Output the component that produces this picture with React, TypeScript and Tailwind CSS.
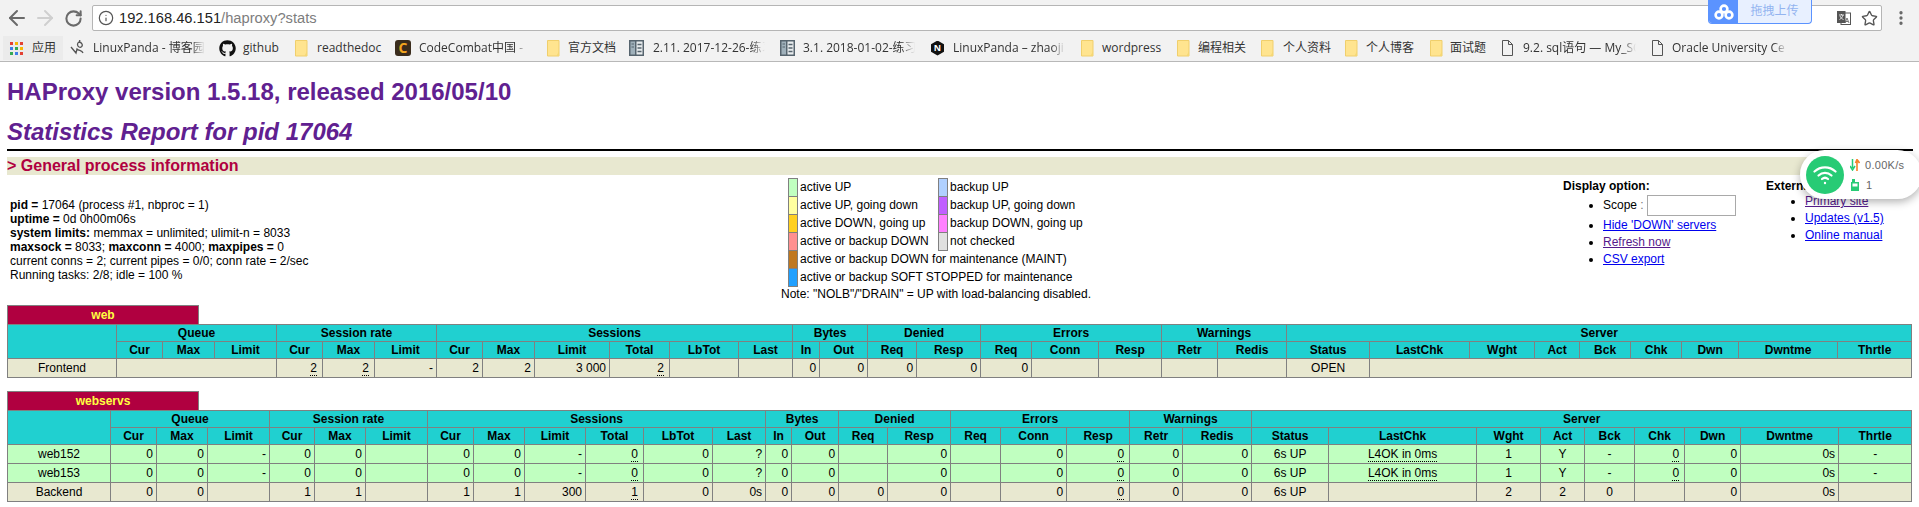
import { ArrowLeft, ArrowRight, RotateCw, Info, Star, MoreVertical } from "lucide-react";
import { FaGithub } from "react-icons/fa";

const webCols = ["w-[109px]", "w-[46px]", "w-[52px]", "w-[62px]", "w-[46px]", "w-[52px]", "w-[62px]", "w-[46px]", "w-[52px]", "w-[75px]", "w-[60px]", "w-[69px]", "w-[54px]", "w-[27px]", "w-[48px]", "w-[49px]", "w-[64px]", "w-[51px]", "w-[67px]", "w-[63px]", "w-[56px]", "w-[69px]", "w-[83px]", "w-[100px]", "w-[65px]", "w-[45px]", "w-[51px]", "w-[51px]", "w-[57px]", "w-[99px]", "w-[74px]"];
const servCols = ["w-[103px]", "w-[46px]", "w-[51px]", "w-[62px]", "w-[45px]", "w-[51px]", "w-[62px]", "w-[46px]", "w-[51px]", "w-[61px]", "w-[58px]", "w-[69px]", "w-[53px]", "w-[26px]", "w-[47px]", "w-[49px]", "w-[63px]", "w-[50px]", "w-[66px]", "w-[63px]", "w-[53px]", "w-[69px]", "w-[77px]", "w-[148px]", "w-[64px]", "w-[44px]", "w-[50px]", "w-[50px]", "w-[56px]", "w-[98px]", "w-[73px]"];

const groups: [string, number][] = [["Queue", 3], ["Session rate", 3], ["Sessions", 6], ["Bytes", 2], ["Denied", 2], ["Errors", 3], ["Warnings", 2], ["Server", 9]];
const subHeads = ["Cur", "Max", "Limit", "Cur", "Max", "Limit", "Cur", "Max", "Limit", "Total", "LbTot", "Last", "In", "Out", "Req", "Resp", "Req", "Conn", "Resp", "Retr", "Redis", "Status", "LastChk", "Wght", "Act", "Bck", "Chk", "Dwn", "Dwntme", "Thrtle"];

// "_" prefix = dotted underline, "^" prefix = centered
const serverRow = ["0", "0", "-", "0", "0", "", "0", "0", "-", "_0", "0", "?", "0", "0", "", "0", "", "0", "_0", "0", "0", "^6s UP", "^_L4OK in 0ms", "^1", "^Y", "^-", "_0", "0", "0s", "^-"];
const backendRow = ["0", "0", "", "1", "1", "", "1", "1", "300", "_1", "0", "0s", "0", "0", "0", "0", "", "0", "_0", "0", "0", "^6s UP", "", "^2", "^2", "^0", "", "0", "0s", ""];

const cell = "border border-[#808080] h-[19px] p-0 px-[3px] align-middle overflow-hidden whitespace-nowrap";

const Cell = ({ value }: { value: string }) => {
  const centered = value.startsWith("^");
  const raw = centered ? value.slice(1) : value;
  const dotted = raw.startsWith("_");
  const text = dotted ? raw.slice(1) : raw;
  return (
    <td className={`${cell} ${centered ? "text-center" : "text-right"}`}>
      {dotted ? <span className={`border-b border-dotted border-black ${centered ? "" : "mr-[2px]"}`}>{text}</span> : text}
    </td>
  );
};

const StatTable = ({ name, cols, children }: { name: string; cols: string[]; children: React.ReactNode }) => (
  <div>
    <div className="w-[192px] h-[19px] bg-[#b00040] border border-[#808080] border-b-0 flex items-center justify-center font-bold text-[#ffff40]">
      {name}
    </div>
    <table className="table-fixed border-collapse w-[1904px]">
      <colgroup>
        {cols.map((c, i) => (
          <col key={i} className={c} />
        ))}
      </colgroup>
      <thead>
        <tr className="bg-[#20d0d0] h-[17px]">
          <th rowSpan={2} className="border border-[#808080] p-0" />
          {groups.map(([label, span]) => (
            <th key={label} colSpan={span} className="border border-[#808080] p-0 h-[17px] font-bold">
              {label}
            </th>
          ))}
        </tr>
        <tr className="bg-[#20d0d0] h-[17px]">
          {subHeads.map((h, i) => (
            <th key={i} className="border border-[#808080] p-0 h-[17px] font-bold">
              {h}
            </th>
          ))}
        </tr>
      </thead>
      <tbody>{children}</tbody>
    </table>
  </div>
);

const Folder = () => (
  <svg width="13" height="17" viewBox="0 0 13 17">
    <path d="M.5.5h11.5v15.5H.5z" fill="#ffe48f" stroke="#f0cf6c" />
    <path d="M12 11v5H9.5z" fill="#f5d774" />
  </svg>
);

const BookIcon = () => (
  <svg width="15" height="16" viewBox="0 0 15 16">
    <rect width="15" height="16" fill="#56646e" />
    <rect x="1.5" y="1.5" width="4.5" height="13" fill="#9fb0ba" />
    <path d="M2.5 4h2.5M2.5 7h2.5" stroke="#56646e" />
    <rect x="7.5" y="1.5" width="6" height="13" fill="#e8ecee" />
    <path d="M8.5 4.5h4M8.5 8h4M8.5 11.5h4" stroke="#56646e" strokeWidth="1.3" />
  </svg>
);

const PageIcon = () => (
  <svg width="11" height="16" viewBox="0 0 11 16" fill="none" stroke="#555" strokeWidth="1">
    <path d="M.5.5h6l4 4v11H.5z" />
    <path d="M6.5.5v4h4" />
  </svg>
);

const Bookmark = ({ icon, label, col, width, gap }: { icon: React.ReactNode; label: string; col: string; width: string; gap: string }) => (
  <div className={`flex items-center shrink-0 ${gap}`}>
    <div className={`${col} shrink-0 flex items-center`}>{icon}</div>
    <span className={`${width} whitespace-nowrap`}>{label}</span>
  </div>
);

// labels that the bar cuts short fade out on the right
const fade = "overflow-hidden [mask-image:linear-gradient(to_right,black_88%,transparent)]";

const legendLeft: [string, string][] = [
  ["bg-[#c0ffc0]", "active UP"],
  ["bg-[#ffffa0]", "active UP, going down"],
  ["bg-[#ffd020]", "active DOWN, going up"],
  ["bg-[#ff9090]", "active or backup DOWN"],
  ["bg-[#c07820]", "active or backup DOWN for maintenance (MAINT)"],
  ["bg-[#20a0ff]", "active or backup SOFT STOPPED for maintenance"],
];
const legendRight: [string, string][] = [
  ["bg-[#b0d0ff]", "backup UP"],
  ["bg-[#c060ff]", "backup UP, going down"],
  ["bg-[#ff80ff]", "backup DOWN, going up"],
  ["bg-[#e0e0e0]", "not checked"],
];

const LegendRow = ({ color, label }: { color: string; label: string }) => (
  <div className="flex h-[18px] items-center whitespace-nowrap">
    <div className={`w-[10px] h-[19px] shrink-0 -mb-px border border-[#808080] ${color}`} />
    <span className="ml-[2px]">{label}</span>
  </div>
);

export default function App() {
  return (
    <div className="relative h-[507px] overflow-hidden bg-white text-black text-[12px] leading-[14px] font-['Liberation_Sans','Noto_Sans_CJK_SC',sans-serif]">
      {/* browser toolbar */}
      <div className="bg-[#f2f2f2] h-[62px] border-b border-[#b8b8b8]">
        <div className="flex items-center h-[31px] pt-[5px]">
          <div className="flex items-center w-[92px] shrink-0 pl-[5px] text-[#6a6a6a]">
            <ArrowLeft size={24} strokeWidth={2} />
            <ArrowRight size={24} strokeWidth={2} className="ml-[4px] text-[#cfcfcf]" />
            <RotateCw size={19} strokeWidth={2.6} className="ml-[7px]" />
          </div>
          <div className="flex items-center w-[1790px] h-[26px] bg-white border border-[#b5b5b5] rounded-[2px] pl-[5px]">
            <Info size={16} strokeWidth={1.8} className="text-[#555]" />
            <span className="ml-[5px] text-[14.7px] text-[#222]">
              192.168.46.151<span className="text-[#7d7d7d]">/haproxy?stats</span>
            </span>
          </div>
          <div className="flex items-center justify-end flex-1 pr-[9px]">
            <MoreVertical size={18} strokeWidth={2.4} className="text-[#666]" />
          </div>
        </div>
        <div className="flex items-center h-[30px] pt-[4px] text-[12px] text-[#333] font-['Open_Sans','Noto_Sans_CJK_SC',sans-serif]">
          <div className="flex items-center ml-[3px] pl-[7px] h-[24px] w-[60px] shrink-0 bg-[#ebebeb]">
            <div className="grid grid-cols-3 gap-[2px] w-[13px] shrink-0">
              <i className="w-[3px] h-[3px] bg-[#e34133]" />
              <i className="w-[3px] h-[3px] bg-[#f6b704]" />
              <i className="w-[3px] h-[3px] bg-[#e34133]" />
              <i className="w-[3px] h-[3px] bg-[#3f7ee8]" />
              <i className="w-[3px] h-[3px] bg-[#35a853]" />
              <i className="w-[3px] h-[3px] bg-[#f6b704]" />
              <i className="w-[3px] h-[3px] bg-[#35a853]" />
              <i className="w-[3px] h-[3px] bg-[#3f7ee8]" />
              <i className="w-[3px] h-[3px] bg-[#e34133]" />
            </div>
            <span className="ml-[9px] whitespace-nowrap">应用</span>
          </div>
          <Bookmark
            icon={
              <svg width="15" height="16" viewBox="0 0 15 16" fill="none" stroke="#555" strokeWidth="1.3">
                <path d="M1 7l5 6 1-4c2 2 5 1 6 4M9 2c-2 1-2 4 0 5s4-1 3-3-2-2-3-2zM9 2l1-2" />
              </svg>
            }
            label="LinuxPanda - 博客园"
            col="w-[23px]"
            width={`w-[112px] ${fade}`}
            gap="ml-[7px]"
          />
          <Bookmark icon={<FaGithub size={17} className="text-[#111]" />} label="github" col="w-[24px]" width="w-[37px]" gap="ml-[14px]" />
          <Bookmark icon={<Folder />} label="readthedoc" col="w-[22px]" width="w-[66px]" gap="ml-[15px]" />
          <Bookmark
            icon={
              <div className="w-[16px] h-[16px] rounded-[3px] bg-[#3a2c1c] flex items-center justify-center text-[14px] leading-none font-bold text-[#f2a51e]">
                C
              </div>
            }
            label="CodeCombat中国 -"
            col="w-[24px]"
            width={`w-[108px] ${fade}`}
            gap="ml-[12px]"
          />
          <Bookmark icon={<Folder />} label="官方文档" col="w-[21px]" width="w-[49px]" gap="ml-[20px]" />
          <Bookmark icon={<BookIcon />} label="2.11. 2017-12-26-练习" col="w-[24px]" width={`w-[112px] ${fade}`} gap="ml-[12px]" />
          <Bookmark icon={<BookIcon />} label="3.1. 2018-01-02-练习" col="w-[23px]" width={`w-[112px] ${fade}`} gap="ml-[15px]" />
          <Bookmark
            icon={
              <div className="w-[13px] h-[15px] bg-[#111] flex items-center justify-center text-[9px] font-bold text-white [clip-path:polygon(50%_0,100%_25%,100%_75%,50%_100%,0_75%,0_25%)]">
                N
              </div>
            }
            label="LinuxPanda – zhaoji"
            col="w-[22px]"
            width={`w-[112px] ${fade}`}
            gap="ml-[16px]"
          />
          <Bookmark icon={<Folder />} label="wordpress" col="w-[21px]" width="w-[60px]" gap="ml-[16px]" />
          <Bookmark icon={<Folder />} label="编程相关" col="w-[21px]" width="w-[48px]" gap="ml-[15px]" />
          <Bookmark icon={<Folder />} label="个人资料" col="w-[22px]" width="w-[48px]" gap="ml-[15px]" />
          <Bookmark icon={<Folder />} label="个人博客" col="w-[21px]" width="w-[50px]" gap="ml-[14px]" />
          <Bookmark icon={<Folder />} label="面试题" col="w-[20px]" width="w-[37px]" gap="ml-[14px]" />
          <Bookmark icon={<PageIcon />} label="9.2. sql语句 — My_SQL" col="w-[21px]" width={`w-[113px] ${fade}`} gap="ml-[15px]" />
          <Bookmark icon={<PageIcon />} label="Oracle University Ce" col="w-[20px]" width={`w-[115px] ${fade}`} gap="ml-[16px]" />
        </div>
      </div>

      {/* upload helper over the address bar */}
      <div className="absolute left-[1708px] top-0 w-[104px] h-[24px] flex rounded-b-[4px] overflow-hidden border border-t-0 border-[#5b93ff] bg-[#e8f0ff]">
        <div className="w-[29px] bg-[#5b93ff] flex items-center justify-center">
          <svg width="20" height="16" viewBox="0 0 20 16" fill="none" stroke="white" strokeWidth="2.6">
            <circle cx="10" cy="5" r="3.4" />
            <circle cx="5" cy="11" r="3.4" />
            <circle cx="15" cy="11" r="3.4" />
          </svg>
        </div>
        <span className="flex-1 text-center text-[12px] leading-[22px] text-[#93b4f0]">拖拽上传</span>
      </div>
      <svg width="14" height="14" viewBox="0 0 14 14" className="absolute left-[1837px] top-[11px]">
        <rect x="4" y="2" width="9.5" height="11.5" fill="white" stroke="#555" />
        <rect width="8.5" height="12" fill="#555" />
        <path d="M2 4h5M4.5 3v1M6 4c-.5 2-2 4-3.5 4.5M3 5c.5 1.500 2 3 3.500 3.500" stroke="white" fill="none" strokeWidth=".8" />
        <path d="M8 12l2-5 2 5M9 10.500h2" stroke="#555" fill="none" strokeWidth=".8" />
      </svg>
      <Star size={17} strokeWidth={1.9} className="absolute left-[1861px] top-[10px] text-[#555]" />

      {/* page body */}
      <div className="pl-[7px] pr-[6px]">
        <h1 className="text-[24px] leading-[28px] font-bold text-[#602090] mt-[16px]">HAProxy version 1.5.18, released 2016/05/10</h1>
        <h2 className="text-[24px] leading-[28px] font-bold italic text-[#602090] mt-[12px]">Statistics Report for pid 17064</h2>
        <hr className="border-0 h-[2px] bg-black mt-[3px]" />
        <h3 className="bg-[#e8e8d0] text-[#b00040] text-[16px] leading-[18px] font-bold mt-[6px] h-[18px]">&gt; General process information</h3>

        <div className="flex h-[130px]">
          <div className="w-[774px] shrink-0 pl-[3px] pt-[23px]">
            <p><b>pid = </b>17064 (process #1, nbproc = 1)</p>
            <p><b>uptime = </b>0d 0h00m06s</p>
            <p><b>system limits:</b> memmax = unlimited; ulimit-n = 8033</p>
            <p><b>maxsock = </b>8033; <b>maxconn = </b>4000; <b>maxpipes = </b>0</p>
            <p>current conns = 2; current pipes = 0/0; conn rate = 2/sec</p>
            <p>Running tasks: 2/8; idle = 100 %</p>
          </div>

          <div className="w-[782px] shrink-0 pt-[3px]">
            <div className="flex pl-[7px]">
              <div className="w-[150px]">
                {legendLeft.map(([color, label]) => (
                  <LegendRow key={label} color={color} label={label} />
                ))}
              </div>
              <div>
                {legendRight.map(([color, label]) => (
                  <LegendRow key={label} color={color} label={label} />
                ))}
              </div>
            </div>
            <p className="whitespace-nowrap mt-[1px]">Note: "NOLB"/"DRAIN" = UP with load-balancing disabled.</p>
          </div>

          <div className="w-[203px] shrink-0 pt-[4px]">
            <b>Display option:</b>
            <ul className="list-disc pl-[40px] mt-[2px]">
              <li className="h-[20px] leading-[20px]">
                Scope <span className="text-[#777]">:</span>
                <span className="inline-block align-top w-[89px] h-[21px] ml-[3px] border border-[#a9a9a9] bg-white" />
              </li>
              <li className="h-[17px] leading-[17px] mt-[2px]"><a className="text-[#0000ee] underline">Hide 'DOWN' servers</a></li>
              <li className="h-[17px] leading-[17px]"><a className="text-[#551a8b] underline">Refresh now</a></li>
              <li className="h-[17px] leading-[17px]"><a className="text-[#0000ee] underline">CSV export</a></li>
            </ul>
          </div>

          <div className="flex-1 pt-[4px] whitespace-nowrap">
            <b>External resources:</b>
            <ul className="list-disc pl-[39px]">
              <li className="h-[17px] leading-[17px]"><a className="text-[#551a8b] underline">Primary site</a></li>
              <li className="h-[17px] leading-[17px]"><a className="text-[#0000ee] underline">Updates (v1.5)</a></li>
              <li className="h-[17px] leading-[17px]"><a className="text-[#0000ee] underline">Online manual</a></li>
            </ul>
          </div>
        </div>

        <StatTable name="web" cols={webCols}>
          <tr className="bg-[#e8e8d0]">
            <Cell value="^Frontend" />
            <td colSpan={3} className={cell} />
            <Cell value="_2" />
            <Cell value="_2" />
            <Cell value="-" />
            <Cell value="2" />
            <Cell value="2" />
            <Cell value="3 000" />
            <Cell value="_2" />
            <Cell value="" />
            <Cell value="" />
            <Cell value="0" />
            <Cell value="0" />
            <Cell value="0" />
            <Cell value="0" />
            <Cell value="0" />
            <Cell value="" />
            <Cell value="" />
            <Cell value="" />
            <Cell value="" />
            <Cell value="^OPEN" />
            <td colSpan={8} className={cell} />
          </tr>
        </StatTable>

        <div className="mt-[13px]">
          <StatTable name="webservs" cols={servCols}>
            <tr className="bg-[#c0ffc0]">
              <Cell value="^web152" />
              {serverRow.map((v, i) => (
                <Cell key={i} value={v} />
              ))}
            </tr>
            <tr className="bg-[#c0ffc0]">
              <Cell value="^web153" />
              {serverRow.map((v, i) => (
                <Cell key={i} value={v} />
              ))}
            </tr>
            <tr className="bg-[#e8e8d0]">
              <Cell value="^Backend" />
              {backendRow.map((v, i) => (
                <Cell key={i} value={v} />
              ))}
            </tr>
          </StatTable>
        </div>
      </div>

      {/* network speed floater */}
      <div className="absolute left-[1800px] top-[150px] w-[122px] h-[49px] rounded-[25px] bg-white shadow-[0_3px_8px_rgba(0,0,0,0.3)] flex items-center pl-[6px]">
        <div className="w-[38px] h-[38px] rounded-full bg-[#27cb75] flex items-center justify-center">
          <svg width="24" height="22" viewBox="0 0 24 22" fill="none" stroke="white" strokeWidth="2.2" strokeLinecap="round">
            <path d="M1.5 7.5c6-5.5 15-5.5 21 0" />
            <path d="M5.5 11.5c3.8-3.4 9.2-3.4 13 0" />
            <path d="M9 15c1.8-1.5 4.2-1.5 6 0" />
            <circle cx="12" cy="19" r="1.2" fill="white" stroke="none" />
          </svg>
        </div>
        <div className="ml-[6px] text-[#666] text-[11px] leading-[20px]">
          <div className="flex items-center gap-[5px]">
            <svg width="10" height="12" viewBox="0 0 10 12">
              <path d="M2.5 0v9M0 7l2.5 4L5 7" fill="none" stroke="#27cb75" strokeWidth="1.5" />
              <path d="M7 12V2M5.5 4L7 0.5 9.5 4" fill="none" stroke="#f5822a" strokeWidth="1.6" />
            </svg>
            <span className="tracking-[0.3px]">0.00K/s</span>
          </div>
          <div className="flex items-center gap-[7px]">
            <svg width="8" height="12" viewBox="0 0 8 12" className="ml-px">
              <path d="M0 3h8v9H0zM1 0h3v3H1z" fill="#27cb75" />
              <rect x="1.5" y="4.500" width="5" height="3" fill="white" />
            </svg>
            <span>1</span>
          </div>
        </div>
      </div>
    </div>
  );
}
